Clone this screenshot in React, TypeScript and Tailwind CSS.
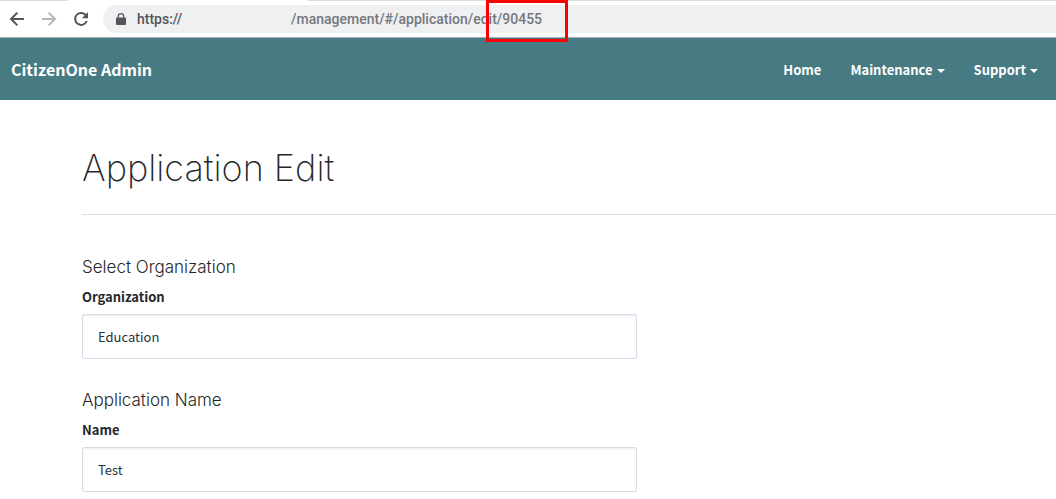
import { useState } from "react";

const sourceSans = "font-['Noto_Sans_CJK_SC','Noto_Sans',sans-serif]";
const thinSans = "font-['Inter','Liberation_Sans',sans-serif]";

function BrowserBar() {
  return (
    <header className="relative border-b border-[#a9adb0] bg-white font-['Roboto',sans-serif]">
      <div className="flex h-px">
        <span className="w-[68px] bg-[#dadce3]" />
        <span className="w-[240px] bg-white" />
        <span className="grow bg-[#dadce3]" />
      </div>
      <div className="flex items-center pt-1 pb-1">
        <div className="flex w-[103px] shrink-0 items-center gap-4 pl-[9px]">
          <button type="button" aria-label="Back" className="text-[#54565b]">
            <svg viewBox="0 0 16 16" className="size-4" fill="none" stroke="currentColor" strokeWidth="2">
              <path d="M15 8H2.2M8.4 1.6L2 8l6.4 6.4" />
            </svg>
          </button>
          <button type="button" aria-label="Forward" className="text-[#b5b6b9]">
            <svg viewBox="0 0 16 16" className="size-4" fill="none" stroke="currentColor" strokeWidth="2">
              <path d="M1 8h12.8M7.6 1.6L14 8l-6.4 6.4" />
            </svg>
          </button>
          <button type="button" aria-label="Reload" className="text-[#54565b]">
            <svg viewBox="0 0 16 16" className="size-4" fill="none" stroke="currentColor" strokeWidth="2">
              <path d="M13.2 4.6A6 6 0 1 0 13.8 10" />
              <path d="M15 1v6.2H8.8z" fill="currentColor" stroke="none" />
            </svg>
          </button>
        </div>
        <div className="flex h-7 grow items-center rounded-l-full bg-[#eff0f2] pl-[13px] text-sm font-medium text-[#75787d]">
          <svg viewBox="0 0 10 13" className="mr-[11px] h-[13px] w-[10px]" fill="#54565b">
            <path
              fillRule="evenodd"
              d="M1 4.500h.7V3.300a3.300 3.300 0 0 1 6.600 0v1.200H9a1 1 0 0 1 1 1V11a1 1 0 0 1-1 1H1a1 1 0 0 1-1-1V5.500a1 1 0 0 1 1-1zm1.900 0h4.200V3.300a2.100 2.100 0 0 0-4.200 0z"
            />
          </svg>
          <span className="w-[154px] text-[#54565b]">https://</span>
          <span>/management/#/application/edit/90455</span>
        </div>
      </div>
      <div className="pointer-events-none absolute top-0 left-[486px] z-10 h-[42px] w-[82px] border-3 border-[#ff0000]" />
    </header>
  );
}

function Caret() {
  return (
    <svg viewBox="0 0 8 4" className="mt-0.5 h-1 w-2" fill="currentColor">
      <path d="M0 0h8L4 4z" />
    </svg>
  );
}

function NavBar() {
  return (
    <nav className="flex h-[62px] items-center justify-between bg-[#477b83] pr-[18px] pl-[11px] text-white">
      <a href="#home" className="text-base font-bold">
        CitizenOne Admin
      </a>
      <div className="flex items-center gap-[29px] pt-px text-[13px] font-bold">
        <a href="#home">Home</a>
        <button type="button" className="flex items-center gap-1">
          Maintenance <Caret />
        </button>
        <button type="button" className="flex items-center gap-1">
          Support <Caret />
        </button>
      </div>
    </nav>
  );
}

function Field({ heading, label, id, initial }: { heading: string; label: string; id: string; initial: string }) {
  const [value, setValue] = useState(initial);
  return (
    <section className="max-w-[555px]">
      <h2 className={`text-[17px] leading-6 font-light ${thinSans}`}>{heading}</h2>
      <label htmlFor={id} className="mt-1.5 block text-[13px] leading-6 font-bold">
        {label}
      </label>
      <input
        id={id}
        value={value}
        onChange={(e) => setValue(e.target.value)}
        className="mt-[5px] block h-[45px] w-full rounded-xs border border-[#d5dee8] px-[15px] text-[13px] font-normal text-[#253340] shadow-[inset_0_1px_2px_rgba(0,0,0,0.08)]"
      />
    </section>
  );
}

export default function App() {
  return (
    <div className={`bg-white text-[#25282b] ${sourceSans}`}>
      <BrowserBar />
      <NavBar />
      <main className="pt-11 pl-[82px]">
        <h1 className={`border-b border-[#dddee1] pb-[22px] text-4xl leading-12 font-extralight ${thinSans}`}>
          Application Edit
        </h1>
        <div className="flex flex-col gap-[29px] pt-10">
          <Field heading="Select Organization" label="Organization" id="organization" initial="Education" />
          <Field heading="Application Name" label="Name" id="name" initial="Test" />
        </div>
      </main>
    </div>
  );
}
